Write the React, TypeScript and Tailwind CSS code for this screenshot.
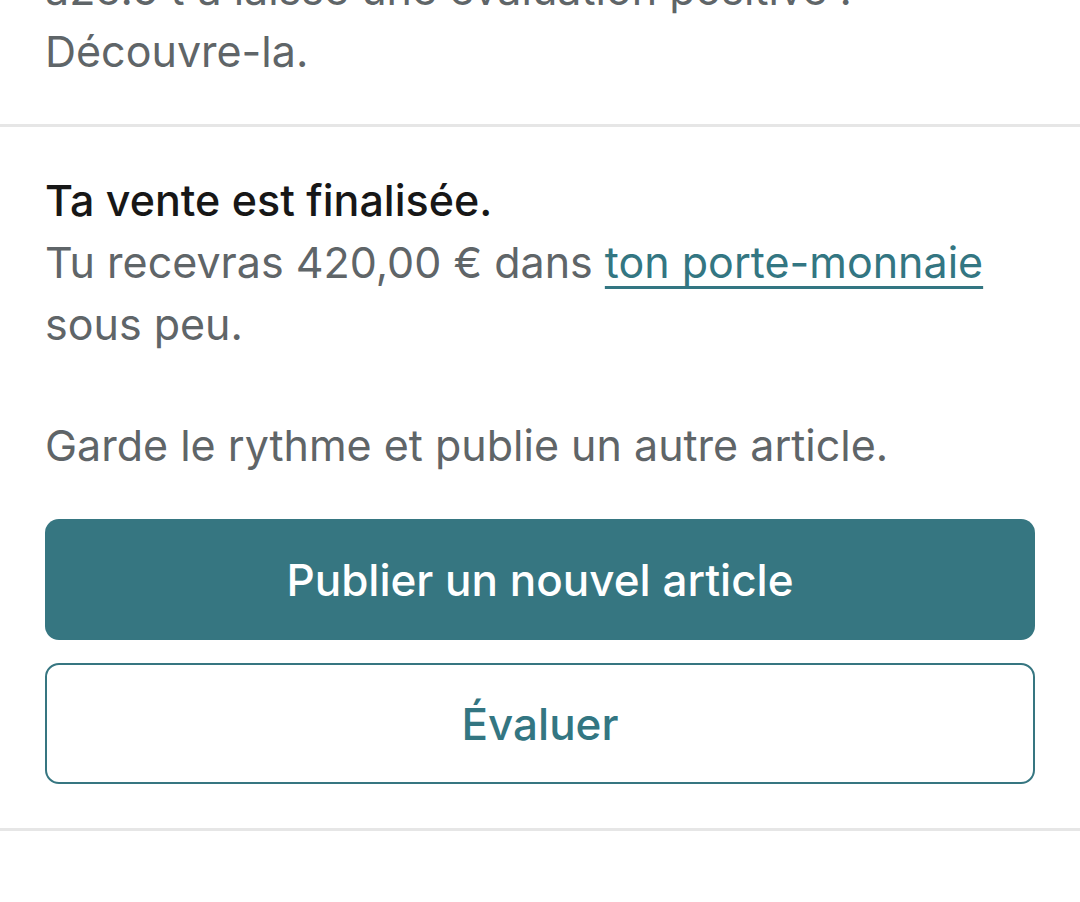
import React from 'react';

const font = { fontFamily: 'Inter, "Noto Sans", sans-serif' };

const App = () => {
  return (
    <div className="min-h-[902px] w-full overflow-hidden bg-white" style={font}>
      {/* previous notification, scrolled partly out of view */}
      <section className="-mt-[42px] px-[45px] pb-[42px] text-[43px] leading-[62px] text-[#5f6568]">
        <p>a2e.5 t'a laissé une évaluation positive !</p>
        <p>Découvre-la.</p>
      </section>
      <div className="h-[3px] bg-[#e6e6e6]" />

      <section className="px-[45px] pt-[42px] pb-[44px] text-[43px] leading-[62px]">
        <p className="font-medium text-[#171717]">Ta vente est finalisée.</p>
        <p className="text-[#5f6568]">
          Tu recevras 420,00 € dans{' '}
          <a
            href="#"
            className="text-[#337682] underline decoration-[2.5px] underline-offset-[8px] [text-decoration-skip-ink:none]"
          >
            ton porte-monnaie
          </a>{' '}
          sous peu.
        </p>
        <p className="mt-[59px] text-[#5f6568]">Garde le rythme et publie un autre article.</p>

        <div className="mt-[43px] flex flex-col gap-[23px]">
          <button className="flex h-[121px] items-center justify-center rounded-[14px] bg-[#367681] text-[44px] font-medium text-white">
            Publier un nouvel article
          </button>
          <button className="flex h-[121px] items-center justify-center rounded-[14px] border-[2px] border-[#367681] bg-white text-[44px] font-medium text-[#337682]">
            Évaluer
          </button>
        </div>
      </section>
      <div className="h-[3px] bg-[#e6e6e6]" />
    </div>
  );
};

export default App;
